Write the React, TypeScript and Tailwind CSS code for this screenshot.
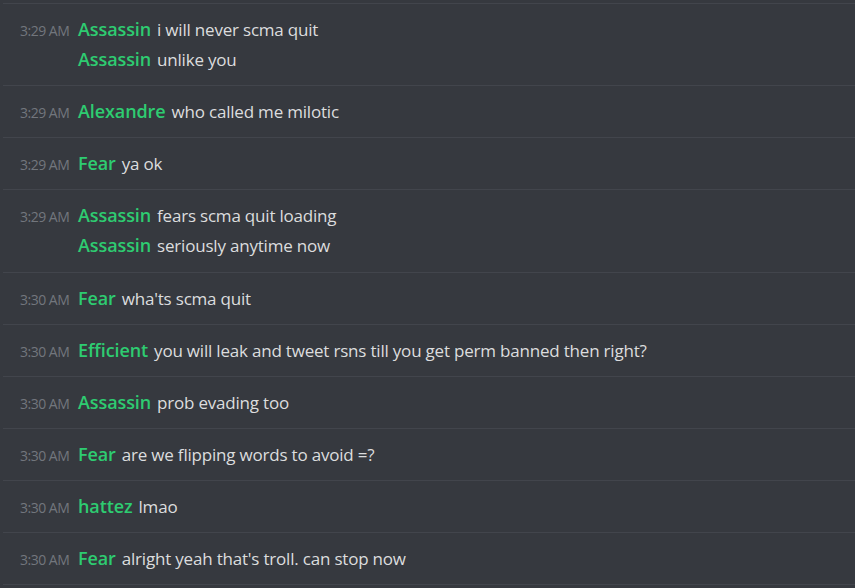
import React from "react";

type Msg = { time: string; extra?: boolean; lines: { name: string; text: string }[] };

const messages: Msg[] = [
  {
    time: "3:29 AM",
    lines: [
      { name: "Assassin", text: "i will never scma quit" },
      { name: "Assassin", text: "unlike you" },
    ],
  },
  { time: "3:29 AM", lines: [{ name: "Alexandre", text: "who called me milotic" }] },
  { time: "3:29 AM", lines: [{ name: "Fear", text: "ya ok" }] },
  {
    time: "3:29 AM",
    extra: true,
    lines: [
      { name: "Assassin", text: "fears scma quit loading" },
      { name: "Assassin", text: "seriously anytime now" },
    ],
  },
  { time: "3:30 AM", lines: [{ name: "Fear", text: "wha'ts scma quit" }] },
  {
    time: "3:30 AM",
    lines: [{ name: "Efficient", text: "you will leak and tweet rsns till you get perm banned then right?" }],
  },
  { time: "3:30 AM", lines: [{ name: "Assassin", text: "prob evading too" }] },
  { time: "3:30 AM", lines: [{ name: "Fear", text: "are we flipping words to avoid =?" }] },
  { time: "3:30 AM", lines: [{ name: "hattez", text: "lmao" }] },
  { time: "3:30 AM", lines: [{ name: "Fear", text: "alright yeah that's troll. can stop now" }] },
];

export default function App() {
  return (
    <div
      className="w-[855px] h-[588px] overflow-hidden bg-[#36393f] pt-[3px]"
      style={{ fontFamily: '"Open Sans", "Noto Sans", sans-serif' }}
    >
      {messages.map((m, i) => (
        <div
          key={i}
          className={`ml-[3px] border-t border-[#42454c] pl-[17px] pt-[10px] ${m.extra ? "pb-[12px]" : "pb-[11px]"}`}
        >
          {m.lines.map((l, j) => (
            <div key={j} className="flex items-baseline h-[30px] leading-[30px]">
              <span className="w-[58px] shrink-0 text-[14px] text-[#72767d] tracking-[-0.5px]">
                {j === 0 ? m.time : ""}
              </span>
              <span className="text-[18px] font-semibold text-[#2ecc71] mr-[6px] tracking-[-0.1px]">{l.name}</span>
              <span className="text-[17px] text-[#dcddde] tracking-[-0.2px]">{l.text}</span>
            </div>
          ))}
        </div>
      ))}
      <div className="ml-[3px] border-t border-[#42454c]" />
    </div>
  );
}
